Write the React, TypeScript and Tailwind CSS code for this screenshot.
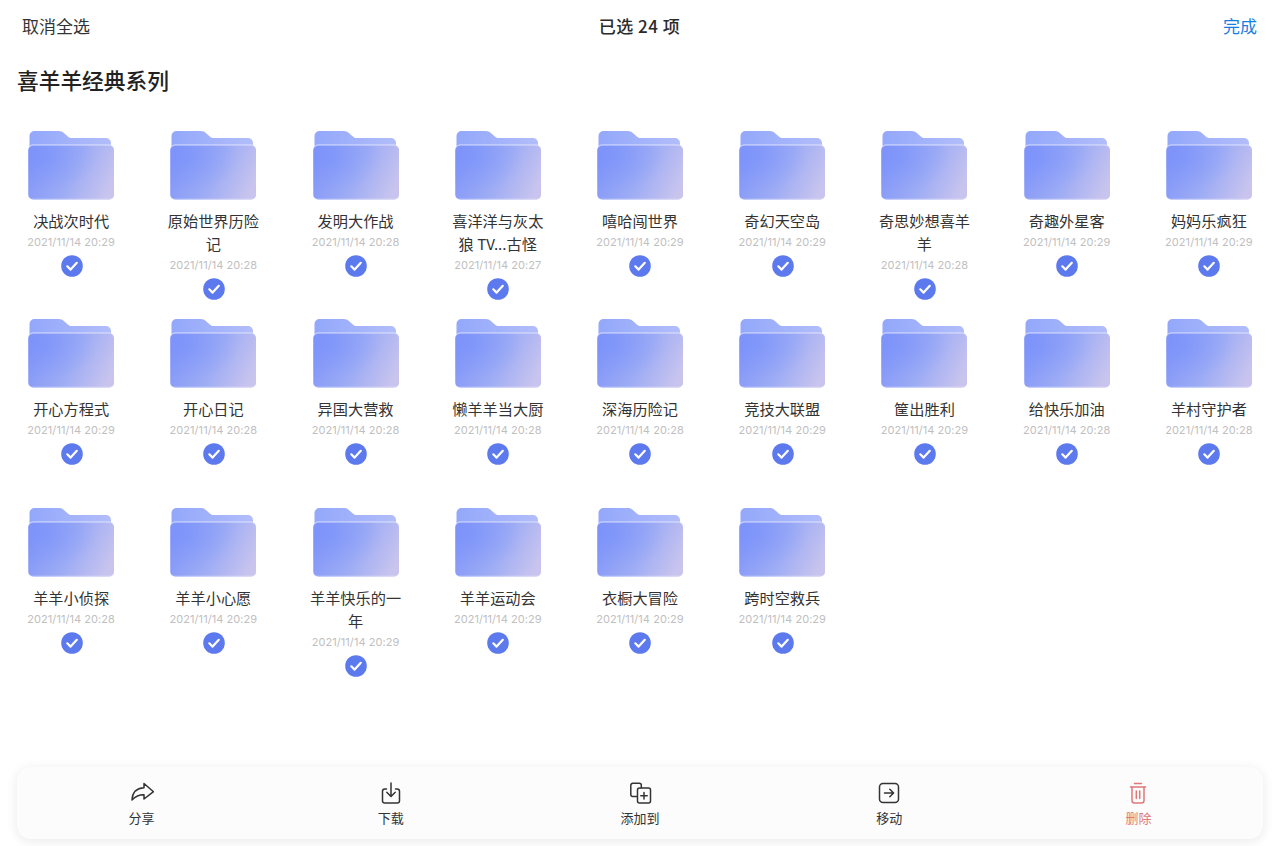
import React from "react";

const items: [string, string][] = [
  ["决战次时代", "20:29"], ["原始世界历险记", "20:28"], ["发明大作战", "20:28"], ["喜洋洋与灰太狼 TV...古怪", "20:27"], ["嘻哈闯世界", "20:29"], ["奇幻天空岛", "20:29"], ["奇思妙想喜羊羊", "20:28"], ["奇趣外星客", "20:29"], ["妈妈乐疯狂", "20:29"],
  ["开心方程式", "20:29"], ["开心日记", "20:28"], ["异国大营救", "20:28"], ["懒羊羊当大厨", "20:28"], ["深海历险记", "20:28"], ["竞技大联盟", "20:29"], ["筐出胜利", "20:29"], ["给快乐加油", "20:28"], ["羊村守护者", "20:28"],
  ["羊羊小侦探", "20:28"], ["羊羊小心愿", "20:29"], ["羊羊快乐的一年", "20:29"], ["羊羊运动会", "20:29"], ["衣橱大冒险", "20:29"], ["跨时空救兵", "20:29"],
];

function Folder() {
  return (
    <svg width="88" height="72" viewBox="0 0 88 72" className="block">
      <path d="M2.500 6a5 5 0 0 1 5-5h24c3 0 4.500 1 6.500 3l2.500 2.200c1.200 1 2.300 1.800 4 1.800h34.500a5 5 0 0 1 5 5v10H2.500z" fill="url(#tab)" />
      <rect x="1.300" y="14.500" width="85.700" height="55.500" rx="5" fill="#dfe3fc" />
      <rect x="1.300" y="15.500" width="85.700" height="54" rx="5" fill="url(#body)" />
      <rect x="1.300" y="15.500" width="85.700" height="54" rx="5" fill="url(#glow)" />
      <rect x="2" y="68.500" width="84" height="1.200" rx="0.600" fill="#ffffff" opacity="0.250" />
    </svg>
  );
}

function Check() {
  return (
    <svg width="22" height="22" viewBox="0 0 22 22" className="block">
      <circle cx="11" cy="11" r="10.800" fill="#5d79ee" />
      <path d="M6.300 11.300l3.300 3.300 6.200-6.800" fill="none" stroke="#fff" strokeWidth="2.200" strokeLinecap="round" strokeLinejoin="round" />
    </svg>
  );
}

function Item({ name, time }: { name: string; time: string }) {
  return (
    <div className="flex flex-col items-center">
      <Folder />
      <div className="w-[100px] mt-[7px] text-center text-[15.200px] leading-[23px] text-[#333333]">{name}</div>
      <div className="mt-[3px] h-[15px] text-[11px] leading-[15px] text-[#c0c0c0] tracking-[0.050px] font-['Inter',sans-serif] whitespace-nowrap">{`2021/11/14 ${time}`}</div>
      <div className="mt-[5px] ml-[1px]"><Check /></div>
    </div>
  );
}

const stroke = { fill: "none", stroke: "currentColor", strokeWidth: 1.500, strokeLinecap: "round" as const, strokeLinejoin: "round" as const };

const icons: Record<string, React.ReactNode> = {
  share: <path {...stroke} d="M14 2.500l9.500 8.200-9.500 7.300v-4.200c-4.800-.2-8.300 1.500-12 5.200.3-6.800 3.500-11.800 12-12.300z" />,
  download: <g {...stroke}><path d="M7.500 8H5.800A2.300 2.300 0 0 0 3.500 10.300v9.400A2.300 2.300 0 0 0 5.800 22h12.400a2.300 2.300 0 0 0 2.300-2.300v-9.400A2.300 2.300 0 0 0 18.200 8h-1.700" /><path d="M12 2v13.500M7.800 11.300l4.200 4.300 4.200-4.300" /></g>,
  add: <g {...stroke}><path d="M9 15.500H4.800a2 2 0 0 1-2-2V4.300a2 2 0 0 1 2-2h6.500a2 2 0 0 1 2 2v2.500" /><rect x="9.500" y="7" width="13" height="15" rx="2" /><path d="M16 11.500v6.500M12.800 14.800h6.400" /></g>,
  move: <g {...stroke}><rect x="2.500" y="2.500" width="19" height="19" rx="3.500" /><path d="M7.500 12h9M12.800 8.200l3.800 3.800-3.800 3.800" /></g>,
  trash: <g {...stroke}><path d="M8.500 2.500h7M4.500 6h15" /><path d="M6 6v13.500A2.500 2.500 0 0 0 8.500 22h7a2.500 2.500 0 0 0 2.500-2.500V6" /><path d="M10.300 10v7.500M13.700 10v7.500" /></g>,
};

function Action({ icon, label, danger }: { icon: string; label: string; danger?: boolean }) {
  return (
    <div className={`flex flex-col items-center pt-[3px] ${danger ? "text-[#e0787a]" : "text-[#333333]"}`}>
      <svg width="24" height="24" viewBox="0 0 24 24" className="block">{icons[icon]}</svg>
      <div className="mt-[3px] text-[13px] leading-[20px]">{label}</div>
    </div>
  );
}

export default function App() {
  return (
    <div className="h-[846px] overflow-hidden bg-white flex flex-col font-['Noto_Sans_CJK_SC','Noto_Sans',sans-serif]">
      <svg width="0" height="0" className="absolute">
        <defs>
          <linearGradient id="tab" x1="0" y1="0" x2="1" y2="0">
            <stop offset="0" stopColor="#93a8fb" />
            <stop offset="1" stopColor="#b2bdfa" />
          </linearGradient>
          <linearGradient id="body" x1="0" y1="0.350" x2="1" y2="0.650">
            <stop offset="0" stopColor="#8296f8" />
            <stop offset="0.500" stopColor="#9cabf5" />
            <stop offset="1" stopColor="#c8c4ee" />
          </linearGradient>
          <radialGradient id="glow" cx="0.200" cy="0.250" r="0.600">
            <stop offset="0" stopColor="#6f8cff" stopOpacity="0.350" />
            <stop offset="1" stopColor="#6f8cff" stopOpacity="0" />
          </radialGradient>
        </defs>
      </svg>
      <header className="grid grid-cols-3 items-center h-[52px] pl-[22px] pr-[23px]">
        <div className="text-[17px] text-[#333333]">取消全选</div>
        <div className="text-center text-[17px] font-medium tracking-[0.500px] text-[#2a2a2a]">已选 24 项</div>
        <div className="text-right text-[17px] text-[#1a7ee0]">完成</div>
      </header>
      <h1 className="pl-[17px] mt-[10px] text-[21.700px] leading-[36px] font-medium text-[#222222]">喜羊羊经典系列</h1>
      <div className="mt-[31.500px] flex-1 grid grid-cols-9 auto-rows-[188.500px] content-start">
        {items.map(([n, t]) => <Item key={n} name={n} time={t} />)}
      </div>
      <div className="mx-[17px] mb-[7px] h-[72px] rounded-[14px] bg-[#fcfcfc] shadow-[0_2px_12px_rgba(0,0,0,0.09)] grid grid-cols-5 items-center">
        <Action icon="share" label="分享" />
        <Action icon="download" label="下载" />
        <Action icon="add" label="添加到" />
        <Action icon="move" label="移动" />
        <Action icon="trash" label="删除" danger />
      </div>
    </div>
  );
}
